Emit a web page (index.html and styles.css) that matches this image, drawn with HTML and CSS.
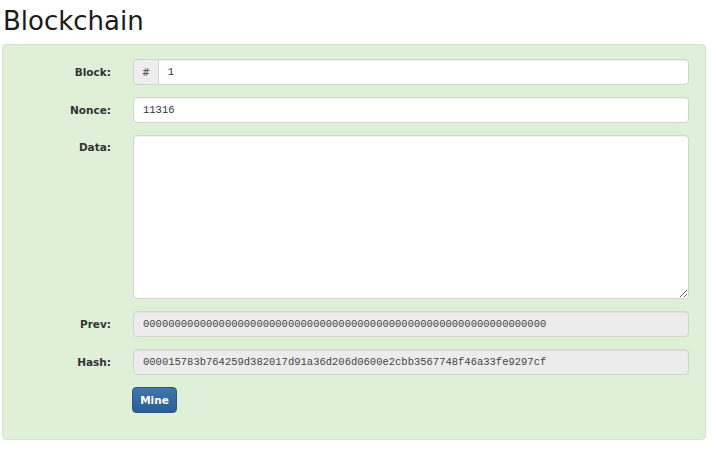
FILE: index.html
```html
<!DOCTYPE html>
<html>
<head>
<meta charset="utf-8">
<link rel="stylesheet" href="styles.css">
</head>
<body>
<h1 class="title">Blockchain</h1>
<div class="panel">
  <form class="form">
    <div class="row">
      <label class="label">Block:</label>
      <div class="group">
        <span class="addon">#</span>
        <input class="field field-grouped mono" type="text" value="1">
      </div>
    </div>
    <div class="row">
      <label class="label">Nonce:</label>
      <input class="field mono" type="text" value="11316">
    </div>
    <div class="row row-top">
      <label class="label">Data:</label>
      <textarea class="field area mono"></textarea>
    </div>
    <div class="row">
      <label class="label">Prev:</label>
      <input class="field mono readonly" type="text" readonly value="0000000000000000000000000000000000000000000000000000000000000000">
    </div>
    <div class="row">
      <label class="label">Hash:</label>
      <input class="field mono readonly" type="text" readonly value="000015783b764259d382017d91a36d206d0600e2cbb3567748f46a33fe9297cf">
    </div>
    <div class="row">
      <span class="label"></span>
      <div><button class="btn" type="button">Mine</button></div>
    </div>
  </form>
</div>
</body>
</html>
```
FILE: styles.css
```css
* { box-sizing: border-box; }
html, body { margin: 0; padding: 0; background: #fff; }
body {
  padding: 0 6px 0 2px;
  font-family: "DejaVu Sans", "Open Sans", sans-serif;
  color: #333;
}
.title {
  margin: 0;
  padding: 5px 0 0 1px;
  height: 44px;
  font-size: 26px;
  font-weight: normal;
  color: #1a1a1a;
  line-height: 32px;
}
.panel {
  background: #dfefd8;
  border: 1px solid #d3e6c8;
  border-radius: 4px;
  padding: 14px 16px 26px 0;
}
.form {
  display: flex;
  flex-direction: column;
  gap: 12px;
}
.row {
  display: grid;
  grid-template-columns: 108px 1fr;
  column-gap: 22px;
  align-items: center;
}
.row-top { align-items: start; }
.row-top .label { padding-top: 6px; }
.label {
  text-align: right;
  font-size: 10.5px;
  font-weight: bold;
  color: #333;
}
.group { display: flex; }
.addon {
  width: 26px;
  height: 26px;
  display: flex;
  align-items: center;
  justify-content: center;
  background: #eeeeee;
  border: 1px solid #cfd6cc;
  border-right: none;
  border-radius: 4px 0 0 4px;
  font-family: "DejaVu Sans", sans-serif;
  font-size: 10px;
  color: #555;
}
.field {
  width: 100%;
  height: 26px;
  border: 1px solid #cfd6cc;
  border-radius: 4px;
  background: #fff;
  padding: 0 9px;
  color: #333;
  box-shadow: inset 0 1px 1px rgba(0,0,0,0.06);
  outline: none;
}
.field-grouped {
  border-radius: 0 4px 4px 0;
}
.mono {
  font-family: "Liberation Mono", monospace;
  font-size: 10.5px;
}
.area {
  height: 164px;
  resize: vertical;
  display: block;
  padding: 6px 9px;
}
.readonly {
  background: #ececec;
  color: #444;
}
.btn {
  width: 45px;
  height: 26px;
  border: 1px solid #2a5788;
  border-radius: 4px;
  background: linear-gradient(#3f76ad, #2b5d92);
  color: #fff;
  font-family: "DejaVu Sans", sans-serif;
  font-size: 10.5px;
  font-weight: bold;
  padding: 0;
  margin-left: -1px;
}
```
